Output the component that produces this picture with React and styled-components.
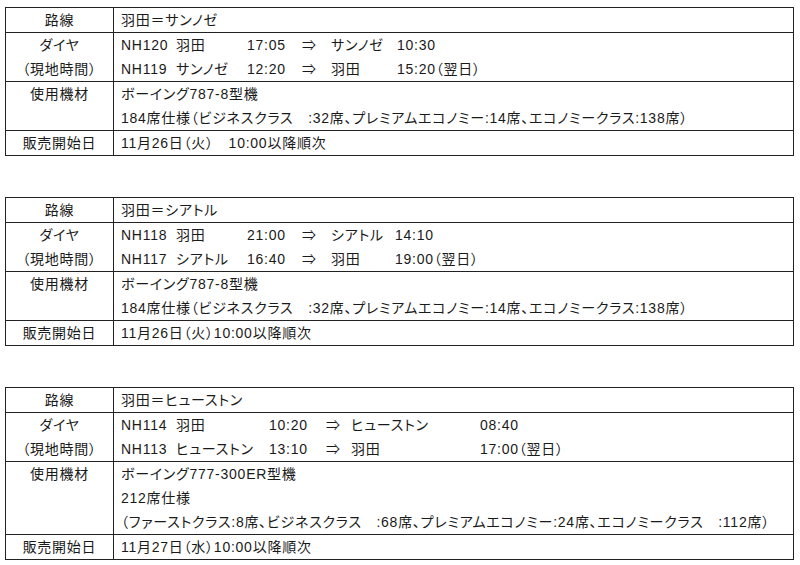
import React from "react";
import styled, { createGlobalStyle } from "styled-components";

const Global = createGlobalStyle`
  html, body { margin: 0; padding: 0; background: #fff; }
  body {
    font-family: "Liberation Sans", "Noto Sans CJK JP", sans-serif;
    font-size: 14px;
    color: #1a1a1a;
  }
`;

const Page = styled.div`
  display: flex;
  flex-direction: column;
  gap: 41px;
  padding: 7px 0 0 5px;
`;

const Table = styled.table`
  width: 789px;
  border-collapse: collapse;
  font-feature-settings: "palt" 1;
  letter-spacing: 0.75px;
  line-height: 24px;
`;

const Label = styled.th`
  width: 107px;
  border: 1px solid #222;
  padding: 0;
  font-weight: 400;
  text-align: center;
  vertical-align: top;
`;

const Cell = styled.td`
  border: 1px solid #222;
  padding: 0 0 0 7px;
  text-align: left;
  vertical-align: top;
  white-space: nowrap;
`;

const Line = styled.div`
  height: 24px;
`;

const FlightGrid = styled.div`
  display: grid;
  grid-template-columns: ${(p) => p.$cols};
  height: 24px;
`;

const Span = styled.span`
  white-space: nowrap;
`;

const Flight = ({ cols, parts }) => (
  <FlightGrid $cols={cols}>
    {parts.map((t, i) => (
      <Span key={i}>{t}</Span>
    ))}
  </FlightGrid>
);

const routes = [
  {
    route: "羽田＝サンノゼ",
    cols: "55px 71px 55px 29px 66px auto",
    flights: [
      ["NH120", "羽田", "17:05", "⇒", "サンノゼ", "10:30"],
      ["NH119", "サンノゼ", "12:20", "⇒", "羽田", "15:20（翌日）"],
    ],
    equipment: [
      "ボーイング787-8型機",
      "184席仕様（ビジネスクラス　:32席、プレミアムエコノミー:14席、エコノミークラス:138席）",
    ],
    sale: "11月26日（火）　10:00以降順次",
  },
  {
    route: "羽田＝シアトル",
    cols: "55px 71px 55px 29px 64px auto",
    flights: [
      ["NH118", "羽田", "21:00", "⇒", "シアトル", "14:10"],
      ["NH117", "シアトル", "16:40", "⇒", "羽田", "19:00（翌日）"],
    ],
    equipment: [
      "ボーイング787-8型機",
      "184席仕様（ビジネスクラス　:32席、プレミアムエコノミー:14席、エコノミークラス:138席）",
    ],
    sale: "11月26日（火）10:00以降順次",
  },
  {
    route: "羽田＝ヒューストン",
    cols: "55px 93px 57px 25px 129px auto",
    flights: [
      ["NH114", "羽田", "10:20", "⇒", "ヒューストン", "08:40"],
      ["NH113", "ヒューストン", "13:10", "⇒", "羽田", "17:00（翌日）"],
    ],
    equipment: [
      "ボーイング777-300ER型機",
      "212席仕様",
      "（ファーストクラス:8席、ビジネスクラス　:68席、プレミアムエコノミー:24席、エコノミークラス　:112席）",
    ],
    sale: "11月27日（水）10:00以降順次",
  },
];

const RouteTable = ({ r }) => (
  <Table>
    <tbody>
      <tr>
        <Label>路線</Label>
        <Cell>
          <Line>{r.route}</Line>
        </Cell>
      </tr>
      <tr>
        <Label>
          <Line>ダイヤ</Line>
          <Line>（現地時間）</Line>
        </Label>
        <Cell>
          {r.flights.map((f, i) => (
            <Flight key={i} cols={r.cols} parts={f} />
          ))}
        </Cell>
      </tr>
      <tr>
        <Label>使用機材</Label>
        <Cell>
          {r.equipment.map((e, i) => (
            <Line key={i}>{e}</Line>
          ))}
        </Cell>
      </tr>
      <tr>
        <Label>販売開始日</Label>
        <Cell>
          <Line>{r.sale}</Line>
        </Cell>
      </tr>
    </tbody>
  </Table>
);

export default function App() {
  return (
    <>
      <Global />
      <Page>
        {routes.map((r, i) => (
          <RouteTable key={i} r={r} />
        ))}
      </Page>
    </>
  );
}
